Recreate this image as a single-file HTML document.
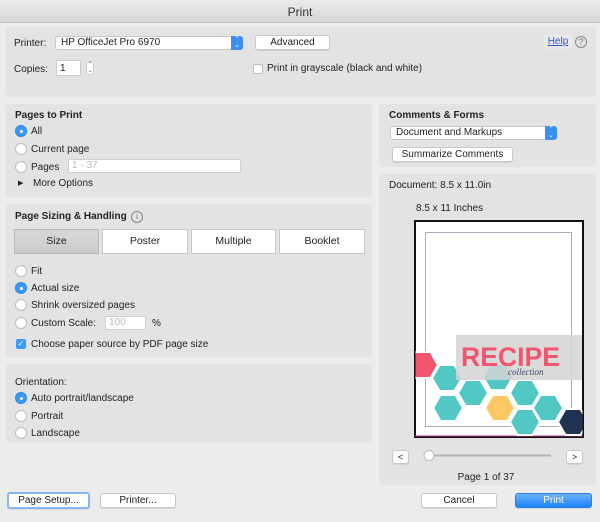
<!DOCTYPE html>
<html><head><meta charset="utf-8"><style>
*{box-sizing:border-box;margin:0;padding:0}
body{width:600px;height:522px;background:#ececec;font-family:"Liberation Sans",Arial,sans-serif;font-size:10px;color:#222;position:relative;overflow:hidden}
.a{position:absolute;white-space:nowrap}
.panel{position:absolute;background:#e3e3e3;border-radius:4px}
.btn{position:absolute;background:#fff;border:1px solid #c8c8c8;border-radius:3px;display:flex;align-items:center;justify-content:center;line-height:1;box-shadow:0 1px 0 rgba(0,0,0,.08)}
.rad{position:absolute;width:12px;height:12px;border-radius:50%;background:#fff;border:1px solid #bdbdbd}
.rad.on{background:#3b99fc;border-color:#2f86e6}
.rad.on::after{content:"";position:absolute;left:3.5px;top:3.5px;width:3px;height:3px;border-radius:50%;background:#fff}
.field{position:absolute;background:#fff;border:1px solid #d0d0d0;color:#bbb;padding-left:3px;line-height:12px}
.b{font-weight:bold}
.pop{position:absolute;background:#fff;border:1px solid #c8c8c8;border-radius:3px;line-height:12px;padding-left:5px}
.pop i{position:absolute;right:-1px;top:-1px;bottom:-1px;width:12px;background:#3b8ff5;border-radius:0 3px 3px 0;color:#fff;font-style:normal;font-size:7px;text-align:center;line-height:6px;padding-top:1px}
.tab{position:absolute;top:229px;height:25px;background:#fff;border:1px solid #c6c6c6;text-align:center;line-height:23px;font-size:10.5px}
</style></head><body>
<div class="a" style="left:0;top:0;width:600px;height:23px;background:linear-gradient(#ebebeb,#d6d6d6);border-bottom:1px solid #c4c4c4;text-align:center;line-height:24px;font-size:12px;color:#333">Print</div>

<div class="panel" style="left:6px;top:27px;width:590px;height:70px"></div>
<div class="a" style="left:14px;top:38px">Printer:</div>
<div class="pop" style="left:55px;top:36px;width:188px;height:14px">HP OfficeJet Pro 6970<i>⌃<br>⌄</i></div>
<div class="btn" style="left:255px;top:35px;width:75px;height:15px">Advanced</div>
<div class="a" style="left:544px;top:35px;width:28px;height:14px;background:#e9e9e9;color:#2a55d4;text-decoration:underline;text-align:center;line-height:14px">Help</div>
<div class="a" style="left:575px;top:36px;width:12px;height:12px;border:1px solid #888;border-radius:50%;text-align:center;font-size:9px;line-height:10px;color:#777">?</div>
<div class="a" style="left:14px;top:64px">Copies:</div>
<div class="field" style="left:56px;top:60px;width:25px;height:16px;color:#222;line-height:15px;border-color:#ccc">1</div>
<div class="a" style="left:86px;top:61px;width:8px;height:14px;background:#fff;border:1px solid #ccc;border-radius:3px;font-size:6px;line-height:6px;text-align:center;color:#555">⌃<br>⌄</div>
<div class="a" style="left:253px;top:64px;width:10px;height:10px;background:#fff;border:1px solid #bbb;border-radius:2px"></div>
<div class="a" style="left:267px;top:63px">Print in grayscale (black and white)</div>

<div class="panel" style="left:6px;top:104px;width:366px;height:93px"></div>
<div class="a b" style="left:15px;top:110px">Pages to Print</div>
<div class="rad on" style="left:15px;top:125px"></div><div class="a" style="left:31px;top:126px">All</div>
<div class="rad" style="left:15px;top:143px"></div><div class="a" style="left:31px;top:144px">Current page</div>
<div class="rad" style="left:15px;top:161px"></div><div class="a" style="left:31px;top:162px">Pages</div>
<div class="field" style="left:68px;top:159px;width:173px;height:14px">1 - 37</div>
<div class="a" style="left:18px;top:179px;font-size:7px">▶</div><div class="a" style="left:33px;top:178px">More Options</div>

<div class="panel" style="left:6px;top:204px;width:366px;height:153px"></div>
<div class="a b" style="left:15px;top:211px">Page Sizing &amp; Handling</div>
<div class="a" style="left:131px;top:211px;width:12px;height:12px;border:1px solid #888;border-radius:50%;text-align:center;font-size:8px;line-height:10px;color:#777;font-family:'Liberation Serif',serif">i</div>
<div class="tab" style="left:14px;width:85px;background:linear-gradient(#d8d8d8,#cbcbcb);border-color:#b8b8b8">Size</div>
<div class="tab" style="left:102px;width:86px">Poster</div>
<div class="tab" style="left:191px;width:85px">Multiple</div>
<div class="tab" style="left:279px;width:86px">Booklet</div>
<div class="rad" style="left:15px;top:265px"></div><div class="a" style="left:31px;top:266px">Fit</div>
<div class="rad on" style="left:15px;top:282px"></div><div class="a" style="left:31px;top:283px">Actual size</div>
<div class="rad" style="left:15px;top:299px"></div><div class="a" style="left:31px;top:300px">Shrink oversized pages</div>
<div class="rad" style="left:15px;top:317px"></div><div class="a" style="left:31px;top:318px">Custom Scale:</div>
<div class="field" style="left:105px;top:316px;width:41px;height:14px">100</div>
<div class="a" style="left:152px;top:318px">%</div>
<div class="a" style="left:16px;top:339px;width:10px;height:10px;background:#3b99fc;border-radius:2px;color:#fff;font-size:8px;line-height:10px;text-align:center">✓</div>
<div class="a" style="left:31px;top:339px">Choose paper source by PDF page size</div>

<div class="panel" style="left:6px;top:364px;width:366px;height:79px"></div>
<div class="a" style="left:15px;top:377px">Orientation:</div>
<div class="rad on" style="left:15px;top:392px"></div><div class="a" style="left:31px;top:393px">Auto portrait/landscape</div>
<div class="rad" style="left:15px;top:410px"></div><div class="a" style="left:31px;top:411px">Portrait</div>
<div class="rad" style="left:15px;top:427px"></div><div class="a" style="left:31px;top:428px">Landscape</div>

<div class="panel" style="left:379px;top:104px;width:217px;height:63px"></div>
<div class="a b" style="left:389px;top:110px">Comments &amp; Forms</div>
<div class="pop" style="left:390px;top:126px;width:167px;height:14px">Document and Markups<i>⌃<br>⌄</i></div>
<div class="btn" style="left:392px;top:147px;width:121px;height:15px">Summarize Comments</div>

<div class="panel" style="left:379px;top:174px;width:217px;height:311px"></div>
<div class="a" style="left:389px;top:180px">Document: 8.5 x 11.0in</div>
<div class="a" style="left:416px;top:203px">8.5 x 11 Inches</div>
<svg class="a" style="left:0;top:0" width="600" height="522" viewBox="0 0 600 522">
<defs><clipPath id="c"><rect x="415.5" y="221.5" width="167" height="215"/></clipPath>
<polygon id="h" points="-15,0 -7.5,-13 7.5,-13 15,0 7.5,13 -7.5,13"/></defs>
<rect x="415" y="221" width="168" height="216" fill="#fff" stroke="#111" stroke-width="2"/>
<line x1="415" y1="436" x2="583" y2="436" stroke="#b03a8c" stroke-width="1"/>
<rect x="425.5" y="232.5" width="146" height="194" fill="none" stroke="#a7b0bd" stroke-width="1"/>
<g clip-path="url(#c)" stroke="#fff" stroke-width="2">
<use href="#h" x="423" y="365" fill="#f2566e"/>
<use href="#h" x="447" y="378" fill="#52c8c4"/>
<use href="#h" x="473" y="393" fill="#52c8c4"/>
<use href="#h" x="498" y="377" fill="#52c8c4"/>
<use href="#h" x="448" y="408" fill="#52c8c4"/>
<use href="#h" x="500" y="408" fill="#fcc866"/>
<use href="#h" x="525" y="393" fill="#52c8c4"/>
<use href="#h" x="548" y="408" fill="#52c8c4"/>
<use href="#h" x="525" y="422" fill="#52c8c4"/>
<use href="#h" x="573" y="422" fill="#213353"/>
</g>
<rect x="456" y="335" width="126" height="45" fill="#d3d3d3" opacity="0.85"/>
<text x="461" y="366" font-family="Liberation Sans,sans-serif" font-weight="bold" font-size="27" fill="#f2566e" textLength="99" lengthAdjust="spacingAndGlyphs">RECIPE</text>
<text x="508" y="375" font-family="Liberation Serif,serif" font-style="italic" font-size="9" fill="#3a4660">collection</text>
<line x1="428" y1="455.5" x2="551" y2="455.5" stroke="#b5b5b5" stroke-width="2"/>
<circle cx="429" cy="455.5" r="5" fill="#fff" stroke="#bbb"/>
</svg>
<div class="btn" style="left:392px;top:450px;width:17px;height:14px;font-size:9px">&lt;</div>
<div class="btn" style="left:566px;top:450px;width:17px;height:14px;font-size:9px">&gt;</div>
<div class="a" style="left:380px;top:472px;width:212px;text-align:center">Page 1 of 37</div>

<div class="btn" style="left:7px;top:492px;width:83px;height:17px;border:2px solid #86b7f0">Page Setup...</div>
<div class="btn" style="left:100px;top:493px;width:76px;height:15px">Printer...</div>
<div class="btn" style="left:421px;top:493px;width:76px;height:15px">Cancel</div>
<div class="btn" style="left:515px;top:493px;width:77px;height:15px;background:linear-gradient(#6cb3fa,#1a82fb);border-color:#2a7ee6;color:#fff">Print</div>
</body></html>
